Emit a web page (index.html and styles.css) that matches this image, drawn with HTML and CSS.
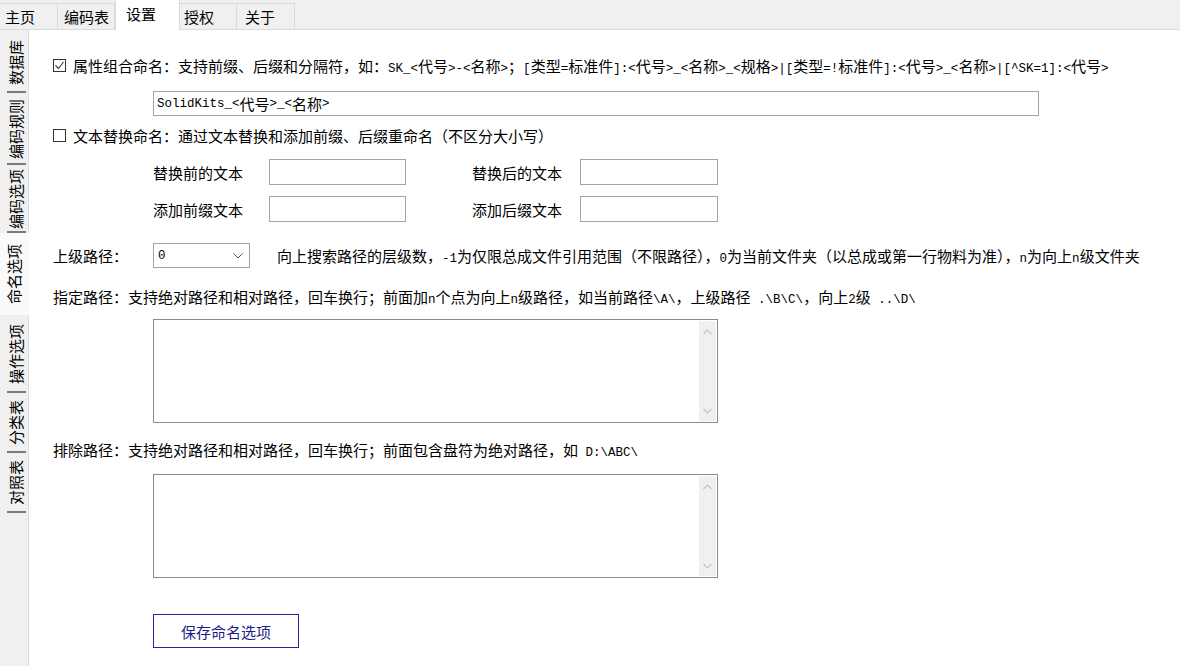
FILE: index.html
```html
<!DOCTYPE html>
<html lang="zh-CN">
<head>
  <meta charset="UTF-8" />
  <title>设置 - 命名选项</title>
  <link rel="stylesheet" href="styles.css">
</head>
<body>
  <div class="top-tabs">
    <div class="top-tab t-home">主页</div>
    <div class="top-tab t-code">编码表</div>
    <div class="top-tab t-set active">设置</div>
    <div class="top-tab t-auth">授权</div>
    <div class="top-tab t-about">关于</div>
  </div>

  <div class="main">
    <div class="side-tabs">
      <div class="side-tab h57"><span>数据库</span></div>
      <div class="side-tab h72"><span>编码规则</span></div>
      <div class="side-tab h68"><span>编码选项</span></div>
      <div class="side-tab h82 active"><span>命名选项</span></div>
      <div class="side-tab h78"><span>操作选项</span></div>
      <div class="side-tab h60"><span>分类表</span></div>
      <div class="side-tab h60"><span>对照表</span></div>
    </div>

    <div class="content">
      <div class="check-row">
        <span class="checkbox checked">
          <svg width="11" height="11" viewBox="0 0 11 11"><path d="M1.5 5.5 L4.5 8.5 L9.5 2" fill="none" stroke="#333" stroke-width="1.1"/></svg>
        </span>
        <span>属性组合命名：支持前缀、后缀和分隔符，如：<span class="en">SK_&lt;</span>代号<span class="en">&gt;-&lt;</span>名称<span class="en">&gt;</span>；<span class="en">[</span>类型<span class="en">=</span>标准件<span class="en">]:&lt;</span>代号<span class="en">&gt;_&lt;</span>名称<span class="en">&gt;_&lt;</span>规格<span class="en">&gt;|[</span>类型<span class="en">=!</span>标准件<span class="en">]:&lt;</span>代号<span class="en">&gt;_&lt;</span>名称<span class="en">&gt;|[^SK=1]:&lt;</span>代号<span class="en">&gt;</span></span>
      </div>
      <div class="text-input wide"><span class="en">SolidKits_&lt;</span>代号<span class="en">&gt;_&lt;</span>名称<span class="en">&gt;</span></div>

      <div class="check-row second">
        <span class="checkbox"></span>
        <span>文本替换命名：通过文本替换和添加前缀、后缀重命名（不区分大小写）</span>
      </div>
      <div class="replace-grid">
        <span class="lbl">替换前的文本</span>
        <div class="text-input"></div>
        <span class="lbl">替换后的文本</span>
        <div class="text-input"></div>
        <span class="lbl">添加前缀文本</span>
        <div class="text-input"></div>
        <span class="lbl">添加后缀文本</span>
        <div class="text-input"></div>
      </div>

      <div class="level-row">
        <span class="level-label">上级路径：</span>
        <div class="combo">
          <span class="en">0</span>
          <svg width="10" height="6" viewBox="0 0 10 6"><path d="M0.5 0.5 L5 5 L9.5 0.5" fill="none" stroke="#555" stroke-width="1"/></svg>
        </div>
        <span class="level-desc">向上搜索路径的层级数，<span class="en">-1</span>为仅限总成文件引用范围（不限路径），<span class="en">0</span>为当前文件夹（以总成或第一行物料为准），<span class="en">n</span>为向上<span class="en">n</span>级文件夹</span>
      </div>

      <div class="note first">指定路径：支持绝对路径和相对路径，回车换行；前面加<span class="en">n</span>个点为向上<span class="en">n</span>级路径，如当前路径<span class="en">\A\</span>，上级路径<span class="en"> .\B\C\</span>，向上<span class="en">2</span>级<span class="en"> ..\D\</span></div>
      <div class="memo">
        <div class="memo-scroll">
          <svg width="9" height="6" viewBox="0 0 9 6"><path d="M0.5 5 L4.5 1 L8.5 5" fill="none" stroke="#c4c4c4" stroke-width="1.2"/></svg>
          <svg width="9" height="6" viewBox="0 0 9 6"><path d="M0.5 1 L4.5 5 L8.5 1" fill="none" stroke="#c4c4c4" stroke-width="1.2"/></svg>
        </div>
      </div>

      <div class="note second">排除路径：支持绝对路径和相对路径，回车换行；前面包含盘符为绝对路径，如<span class="en"> D:\ABC\</span></div>
      <div class="memo">
        <div class="memo-scroll">
          <svg width="9" height="6" viewBox="0 0 9 6"><path d="M0.5 5 L4.5 1 L8.5 5" fill="none" stroke="#c4c4c4" stroke-width="1.2"/></svg>
          <svg width="9" height="6" viewBox="0 0 9 6"><path d="M0.5 1 L4.5 5 L8.5 1" fill="none" stroke="#c4c4c4" stroke-width="1.2"/></svg>
        </div>
      </div>

      <button class="save-btn">保存命名选项</button>
    </div>
  </div>
</body>
</html>
```

FILE: styles.css
```css
body {
  margin: 0;
  padding: 0;
  background: #fff;
  color: #000;
  font-family: "Noto Sans CJK SC", "Liberation Sans", sans-serif;
  font-size: 15px;
  height: 666px;
  overflow: hidden;
}

.en {
  font-family: "Liberation Mono", monospace;
  font-size: 12.5px;
}

/* top tab strip */
.top-tabs {
  display: flex;
  align-items: flex-end;
  height: 30px;
  background: #f0f0f0;
  border-bottom: 1px solid #dadada;
  box-sizing: border-box;
}

.top-tab {
  height: 26px;
  line-height: 25px;
  box-sizing: border-box;
  border: 1px solid #dadada;
  border-bottom: none;
  border-left: none;
  background: #f0f0f0;
  padding-left: 6px;
}

.t-home { width: 58px; padding-left: 5px; }
.t-code { width: 57px; }
.t-set { width: 65px; padding-left: 10px; }
.t-auth { width: 57px; padding-left: 4px; }
.t-about { width: 58px; padding-left: 8px; }

.top-tab.active {
  height: 31px;
  line-height: 27px;
  background: #fff;
  border-left: 1px solid #dadada;
  margin-bottom: -1px;
}

/* body */
.main {
  display: flex;
  height: 636px;
}

.side-tabs {
  width: 29px;
  box-sizing: border-box;
  background: #f0f0f0;
  border-right: 1px solid #dadada;
  padding-top: 3px;
  display: flex;
  flex-direction: column;
}

.side-tab {
  display: flex;
  align-items: center;
  justify-content: center;
  position: relative;
  margin-left: 3px;
}

.side-tab::after {
  content: "";
  position: absolute;
  left: 4px;
  right: 2px;
  bottom: 0;
  height: 2px;
  background: #7a7a7a;
}

.side-tab span {
  writing-mode: vertical-rl;
  text-orientation: sideways;
  transform: rotate(180deg);
  line-height: 20px;
}

.side-tab.active {
  background: #fafafa;
  margin-left: 0;
  margin-right: -1px;
  padding-right: 1px;
}

.side-tab.active::after { display: none; }

.h57 { height: 60px; }
.h72 { height: 72px; }
.h68 { height: 68px; }
.h82 { height: 82px; }
.h78 { height: 78px; }
.h60 { height: 60px; }

.content {
  flex: 1;
  padding: 24px 0 0 24px;
  display: flex;
  flex-direction: column;
  align-items: flex-start;
}

.check-row {
  display: flex;
  align-items: center;
  height: 22px;
  white-space: nowrap;
}

.check-row.second {
  margin-top: 8px;
}

.checkbox {
  width: 13px;
  height: 13px;
  box-sizing: border-box;
  border: 1px solid #333;
  background: #fff;
  margin-right: 7px;
  display: flex;
  align-items: center;
  justify-content: center;
}

.text-input {
  height: 26px;
  width: 137px;
  box-sizing: border-box;
  border: 1px solid #a5a5a5;
  background: #fff;
}

.text-input.wide {
  width: 886px;
  height: 25px;
  margin: 15px 0 0 100px;
  display: flex;
  align-items: center;
  padding-left: 3px;
  white-space: nowrap;
}

.replace-grid {
  display: grid;
  grid-template-columns: 116px 137px 66px 108px 138px;
  row-gap: 11px;
  align-items: center;
  margin: 13px 0 0 100px;
}

.replace-grid .lbl:nth-of-type(2),
.replace-grid .lbl:nth-of-type(4) {
  grid-column: 4;
}

.replace-grid .text-input:nth-of-type(2),
.replace-grid .text-input:nth-of-type(4) {
  grid-column: 5;
  width: 138px;
}

.level-row {
  display: flex;
  align-items: center;
  margin-top: 21px;
  white-space: nowrap;
}

.level-label {
  width: 100px;
}

.combo {
  width: 97px;
  height: 25px;
  box-sizing: border-box;
  border: 1px solid #a5a5a5;
  display: flex;
  align-items: center;
  justify-content: space-between;
  padding: 0 6px 0 4px;
  margin-right: 27px;
}

.note {
  height: 22px;
  line-height: 22px;
  white-space: nowrap;
}

.note.first { margin-top: 18px; }
.note.second { margin-top: 16px; }

.memo {
  width: 565px;
  height: 104px;
  box-sizing: border-box;
  border: 1px solid #8a8a8a;
  background: #fff;
  margin: 11px 0 0 100px;
  display: flex;
  justify-content: flex-end;
  padding: 1px;
}

.note.second + .memo {
  margin-top: 13px;
}

.memo-scroll {
  width: 17px;
  background: #f0f0f0;
  display: flex;
  flex-direction: column;
  justify-content: space-between;
  align-items: center;
  padding: 8px 0 7px;
}

.save-btn {
  margin: 36px 0 0 100px;
  width: 146px;
  height: 34px;
  border: 1px solid #2323a8;
  background: #fff;
  color: #1c1c8c;
  font-family: "Noto Sans CJK SC", sans-serif;
  font-size: 15px;
  padding: 0;
}
```
